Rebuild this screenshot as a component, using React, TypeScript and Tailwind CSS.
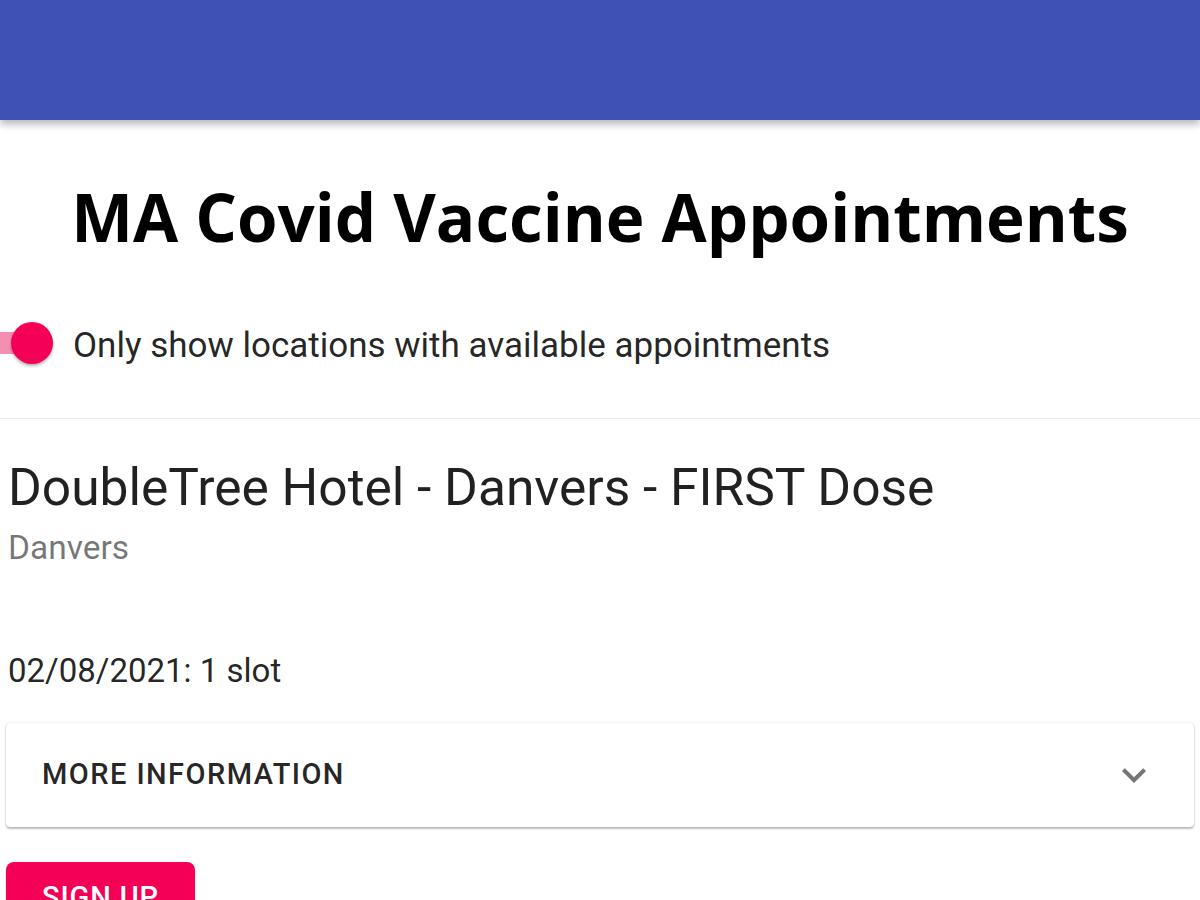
export default function App() {
  return (
    <div className="min-h-[900px] bg-white font-['Roboto',sans-serif] overflow-hidden">
      {/* App bar */}
      <div className="h-[120px] bg-[#3f51b5] shadow-[0_4px_8px_rgba(0,0,0,0.3)]" />

      <h1 className="mt-[57px] text-center font-['Open_Sans',sans-serif] text-[65.5px] font-bold leading-[80px] text-black">
        MA Covid Vaccine Appointments
      </h1>

      {/* Toggle */}
      <div className="mt-[59px] flex h-[56px] items-center">
        <div className="relative h-[56px] w-[58px]">
          <div className="absolute left-0 top-[16px] h-[22px] w-[50px] rounded-r-full bg-[#f48fb1]" />
          <div className="absolute left-[11px] top-[6px] h-[42px] w-[42px] rounded-full bg-[#f50057] shadow-[0_2px_3px_rgba(0,0,0,0.3)]" />
        </div>
        <span className="ml-[15px] mt-[4px] text-[35px] leading-[44px] text-[rgba(0,0,0,0.87)]">Only show locations with available appointments</span>
      </div>

      <div className="mt-[46px] h-px bg-[rgba(0,0,0,0.08)]" />

      <div className="px-[8px] pt-[39px]">
        <div className="text-[51.5px] leading-[60px] text-[rgba(0,0,0,0.87)]">DoubleTree Hotel - Danvers - FIRST Dose</div>
        <div className="mt-[8px] text-[33.5px] leading-[44px] text-[rgba(0,0,0,0.54)]">Danvers</div>
        <div className="mt-[79px] text-[33px] leading-[44px] text-[rgba(0,0,0,0.87)]">02/08/2021: 1 slot</div>
      </div>

      <div className="mx-[6px] mt-[30px] flex h-[104px] items-center justify-between rounded-[4px] bg-white pl-[36px] pr-[36px] shadow-[0_2px_2px_rgba(0,0,0,0.25),0_0_2px_rgba(0,0,0,0.15)]">
        <span className="text-[29px] font-medium tracking-[0.05em] text-[rgba(0,0,0,0.87)]">MORE INFORMATION</span>
        <svg width="48" height="48" viewBox="0 0 24 24">
          <path d="M16.59 8.59L12 13.17 7.41 8.59 6 10l6 6 6-6z" fill="rgba(0,0,0,0.54)" />
        </svg>
      </div>

      <div className="ml-[6px] mt-[35px] inline-flex h-[72px] w-[189px] items-center justify-center rounded-[8px] bg-[#f50057] text-[29px] font-medium tracking-[0.03em] text-white shadow-[0_3px_2px_rgba(0,0,0,0.2)]">
        SIGN UP
      </div>
    </div>
  )
}
